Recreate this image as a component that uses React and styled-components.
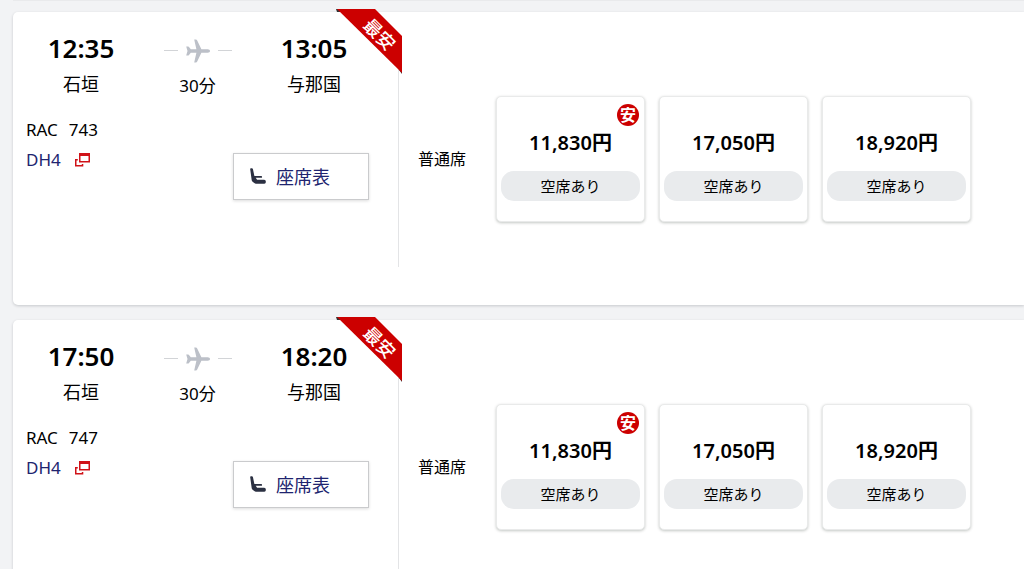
import React from 'react';
import styled, { createGlobalStyle } from 'styled-components';

const Global = createGlobalStyle`
  * { box-sizing: border-box; }
  html { background: #f2f3f5; }
  body { margin: 0; color: #000; font-family: "Noto Sans", "Noto Sans CJK JP", sans-serif; font-size: 17px; line-height: 24px; }
  html { scrollbar-width: none; }
`;

const List = styled.main`
  display: flex;
  flex-direction: column;
  gap: 15px;
  padding: 0 0 16px 13px;
`;

const Previous = styled.div`
  height: 1px;
  margin-bottom: -4px;
  background: #e9eaec;
`;

const Card = styled.article`
  display: flex;
  height: 293px;
  background: #fff;
  border-radius: 5px 0 0 5px;
  box-shadow: 0 1px 3px rgba(0, 10, 20, 0.18);
`;

const Flight = styled.section`
  position: relative;
  width: 385px;
  flex: none;
  padding: 19px 29px 0 13px;
`;

const Divider = styled.div`
  width: 1px;
  height: 215px;
  margin-top: 40px;
  background: #e3e4e6;
`;

const Route = styled.div`
  display: grid;
  grid-template-columns: 110px 1fr 110px;
  text-align: center;
`;

const Stop = styled.div`
  display: flex;
  flex-direction: column;
`;

const Time = styled.time`
  font-size: 26px;
  font-weight: 600;
  line-height: 34px;
`;

const Place = styled.span`
  padding-top: 7px;
  font-size: 18px;
`;

const Line = styled.div`
  display: flex;
  align-items: center;
  justify-content: center;
  gap: 8px;
  height: 39px;
  &::before, &::after { content: ""; width: 14px; height: 1px; background: #d2d4d7; }
`;

const Duration = styled.span`
  padding-top: 4px;
  font-size: 17px;
`;

const Details = styled.div`
  display: flex;
  justify-content: space-between;
  padding-top: 17px;
`;

const Info = styled.div`
  display: flex;
  flex-direction: column;
  line-height: 30px;
`;

const FlightNumber = styled.span`
  display: flex;
  gap: 11px;
`;

const Aircraft = styled.a`
  display: flex;
  align-items: center;
  gap: 14px;
  color: #20246f;
  text-decoration: none;
`;

const SeatButton = styled.button`
  display: flex;
  align-items: center;
  gap: 9px;
  width: 136px;
  height: 47px;
  margin-top: 38px;
  padding: 0 0 0 16px;
  color: #20246f;
  font: inherit;
  font-size: 18px;
  background: #fff;
  border: 1px solid #cacbcd;
  box-shadow: 0 1px 3px rgba(0, 0, 0, 0.14);
`;

const Ribbon = styled.svg`
  position: absolute;
  top: -3px;
  right: -4px;
  font-size: 18px;
  font-weight: 500;
`;

const Fares = styled.section`
  display: flex;
  align-items: center;
  padding-left: 19px;
`;

const Cabin = styled.h2`
  width: 78px;
  margin: 0;
  font-size: 16px;
  font-weight: 400;
`;

const FareRow = styled.div`
  display: flex;
  gap: 14px;
`;

const Fare = styled.button`
  position: relative;
  display: flex;
  flex-direction: column;
  justify-content: flex-end;
  width: 149px;
  height: 126px;
  padding: 0 4px 20px;
  color: #000;
  font: inherit;
  text-align: center;
  background: #fff;
  border: 1px solid #e9eaea;
  border-radius: 5px;
  box-shadow: 0 1px 3px rgba(0, 20, 10, 0.24);
`;

const Price = styled.strong`
  font-size: 20px;
  font-weight: 600;
  line-height: 28px;
`;

const Seats = styled.span`
  margin-top: 14px;
  font-size: 15px;
  line-height: 30px;
  background: #e9ebed;
  border-radius: 13px;
`;

const Cheap = styled.span`
  position: absolute;
  top: 7px;
  right: 5px;
  width: 22px;
  height: 22px;
  color: #fff;
  font-size: 16px;
  font-weight: 700;
  line-height: 22px;
  background: #c00;
  border-radius: 50%;
`;

const Plane = () => (
  <svg width="24" height="24" viewBox="0 0 24 24" fill="#bcc0c8" aria-hidden="true">
    <path d="M24 12c0-1-.9-1.7-2.3-1.7h-6.3L11.2 1.6Q10.8.6 9.8.6H8.2l2.2 9.7H4.8L2.8 7.8Q2.5 7.5 2 7.5H.2L1.5 12 .2 16.5H2q.5 0 .8-.3l2-2.5h5.6L8.2 23.4h1.6q1 0 1.4-1l4.2-8.7h6.3C23.1 13.7 24 13 24 12z" />
  </svg>
);

const WindowIcon = () => (
  <svg width="15" height="14" viewBox="0 0 15 14" fill="#d01218" aria-hidden="true">
    <path fillRule="evenodd" d="M4 0h11v9.5H4zM5.5 3v5h8V3z" />
    <path d="M0 6h2.8v1.5H1.5v4.6h5.3V11h1.5v2.6H0z" />
  </svg>
);

const SeatIcon = () => (
  <svg width="17" height="17" viewBox="0 0 17 17" fill="#2b3042" aria-hidden="true">
    <path d="M.2 1.2Q0 .2 1 .2h.8q.9 0 1.1.9L4.4 8h6.8q.9 0 .9.9t-.9.9H5.7l1.4 1.9h7.1q1.6 0 1.6 1.6v1q0 1.4-1.4 1.4H5.9q-.9 0-1.6-.6l-1.7-1.4q-.7-.6-.9-1.5z" />
  </svg>
);

const flights = [
  { number: '743', from: '12:35', to: '13:05' },
  { number: '747', from: '17:50', to: '18:20' },
];
const fares = ['11,830', '17,050', '18,920'];

const FlightCard = ({ flight }) => (
  <Card>
    <Flight>
      <Route>
        <Stop><Time>{flight.from}</Time><Place>石垣</Place></Stop>
        <Stop><Line><Plane /></Line><Duration>30分</Duration></Stop>
        <Stop><Time>{flight.to}</Time><Place>与那国</Place></Stop>
      </Route>
      <Details>
        <Info>
          <FlightNumber><span>RAC</span><span>{flight.number}</span></FlightNumber>
          <Aircraft href="#aircraft">DH4<WindowIcon /></Aircraft>
        </Info>
        <SeatButton type="button"><SeatIcon />座席表</SeatButton>
      </Details>
      <Ribbon width="66" height="65" viewBox="0 0 66 65">
        <path d="M0 0h4v3H1zM66 65v-4h-3z" fill="#333" />
        <path d="M1 0h38l27 27v37z" fill="#c00" />
        <text x="43" y="32" fill="#fff" textAnchor="middle" transform="rotate(45 43 26)">最安</text>
      </Ribbon>
    </Flight>
    <Divider />
    <Fares>
      <Cabin>普通席</Cabin>
      <FareRow>
        {fares.map((price, i) => (
          <Fare type="button" key={price}>
            {i === 0 && <Cheap>安</Cheap>}
            <Price>{price}円</Price>
            <Seats>空席あり</Seats>
          </Fare>
        ))}
      </FareRow>
    </Fares>
  </Card>
);

export default function App() {
  return (
    <>
      <Global />
      <List>
        <Previous />
        {flights.map((flight) => <FlightCard key={flight.number} flight={flight} />)}
      </List>
    </>
  );
}
